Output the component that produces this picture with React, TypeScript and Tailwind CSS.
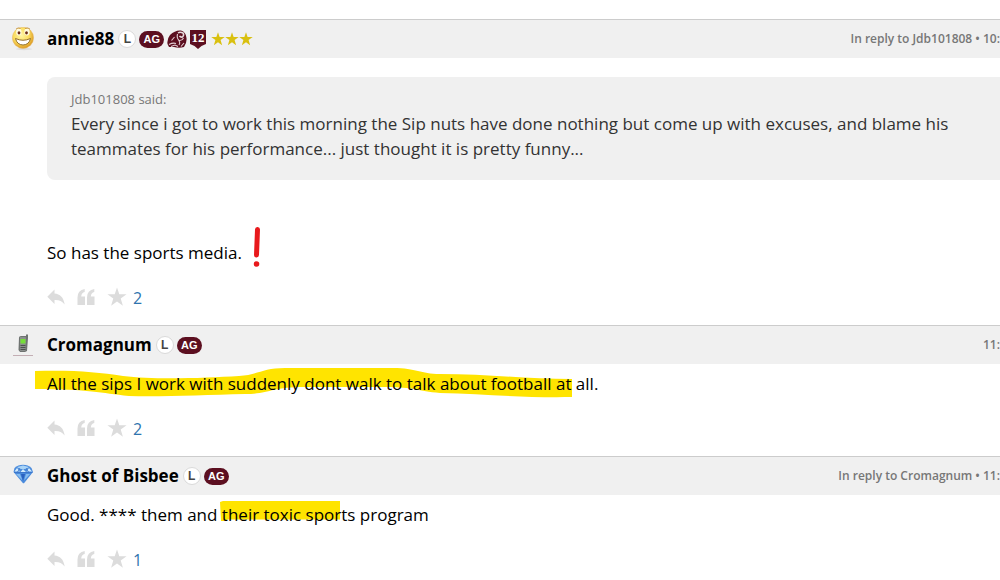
import React from 'react';

interface Post {
  author: string;
  avatar: React.ReactNode;
  veteran?: boolean;
  meta: string;
  quote?: { author: string; text: string };
  body: React.ReactNode;
  stars: number;
}

const SmileyAvatar = () => (
  <svg className="h-6 w-6" viewBox="0 0 24 24" aria-hidden="true">
    <defs>
      <radialGradient id="smile" cx="42%" cy="38%" r="62%">
        <stop offset="0" stopColor="#fff6a6" />
        <stop offset="0.6" stopColor="#fadb5c" />
        <stop offset="1" stopColor="#dc9a24" />
      </radialGradient>
    </defs>
    <ellipse cx="13" cy="22" rx="8" ry="1.2" fill="#dedede" />
    <circle cx="12" cy="10.8" r="10.6" fill="url(#smile)" stroke="#e5b868" strokeWidth="0.5" />
    <ellipse cx="7.8" cy="5" rx="2.7" ry="3.4" fill="#fffbe0" />
    <ellipse cx="16" cy="5" rx="2.7" ry="3.4" fill="#fffbe0" />
    <path d="M5 2Q7 .2 9.5 1.5M14 1.5Q17 .2 19 2" stroke="#c08a35" strokeWidth="0.8" fill="none" />
    <ellipse cx="8" cy="5.8" rx="1.4" ry="1.6" fill="#6b2a16" />
    <ellipse cx="15.5" cy="5.8" rx="1.4" ry="1.6" fill="#6b2a16" />
    <path d="M4.5 11.5Q12 15 19.5 11.5Q18 17.8 12 18Q6 17.8 4.5 11.5Z" fill="#fff" stroke="#94702e" strokeWidth="1" />
  </svg>
);

const PhoneAvatar = () => (
  <svg className="h-6 w-6" viewBox="0 0 24 24" aria-hidden="true">
    <path d="M2 22.5H22" stroke="#c3aeb4" strokeWidth="1" />
    <path d="M15 3V1.5h2V5L16 18l-2 1H9l-1.5-2L8 4.5Q8 3 10 3z" fill="#6f7371" />
    <path d="M9 4h5.5l.5 1-.5 13H9z" fill="#8b8f8d" />
    <rect x="9.5" y="6" width="5" height="4.5" fill="#75df38" />
    <path d="M9.5 12.5h5M9.5 14.5h5M9.5 16.5h5" stroke="#4c504e" strokeWidth="1" />
  </svg>
);

const DiamondAvatar = () => (
  <svg className="h-6 w-6" viewBox="0 0 24 24" aria-hidden="true">
    <path d="M3.5 4Q7 .8 12 .8T20.5 4L22 8 13 19.2H12L2.5 8z" fill="#4b8bdc" />
    <path d="M6 3L12 1.5 18 3 15 5H9z" fill="#a9d4f7" />
    <path d="M3.5 7.5L6 4l3 3.500zM9.5 8L12 5l3 3zM15.5 7.5L18 4l3 3.500z" fill="#d3ecfc" />
    <path d="M5 10h4l2.500 6.500zM15 10h4l-6 6.500z" fill="#86bdf0" />
    <path d="M10 10h4l-2 7z" fill="#2a62c0" />
    <path d="M3 8.5H21.5M9 4L6.5 8M15 4L17.5 8" stroke="#3872c8" strokeWidth="0.8" />
  </svg>
);

const HelmetBadge = () => (
  <svg className="h-5 w-5" viewBox="0 0 20 20" aria-label="Ring of honor">
    <path d="M.5 15Q-.2 10 3 6Q8 1 14 1.5Q19 3 19.5 9Q20 14 17 18Q12 19.5 7 18H2z" fill="#5c0f20" />
    <path d="M11 4Q13 2.5 16 4Q17.5 6 15.5 8Q13.5 8.5 12.5 7" stroke="#e8d9dc" strokeWidth="1.5" fill="none" />
    <path d="M10.5 5Q9.500 9 12 11.500Q13.500 14 12 16M12 11.500Q15 12 16.500 9M2 15.500Q6 13.500 9 14.500M4 17.500L8 16 11 17.500M14 17.500L17 14M4.500 11.500L7.500 8" stroke="#e3cfd4" strokeWidth="1.1" fill="none" />
  </svg>
);

const TwelveBadge = () => (
  <svg className="h-5 w-4" viewBox="0 0 16 20" aria-label="12th man">
    <path d="M0 1H16V15L11.5 17 8 20 4.5 17 0 15z" fill="#5c0f20" />
    <text x="8" y="13" textAnchor="middle" fontSize="13" fontWeight="700" fill="#fff" fontFamily="Liberation Serif, serif">12</text>
  </svg>
);

const StarShape = ({ className }: { className: string }) => (
  <svg className={className} viewBox="0 0 20 20" fill="currentColor" aria-hidden="true">
    <path d="M10 .5L12.3 7.3H19.6L13.7 11.6 15.9 18.8 10 14.5 4.1 18.8 6.3 11.6 .4 7.3H7.7z" />
  </svg>
);

const ReplyIcon = () => (
  <svg className="h-[18px] w-[18px]" viewBox="0 0 18 18" fill="currentColor" aria-hidden="true">
    <path d="M7.5 1.5V5.5C13 6 16.5 9 17.7 16.5C15 12.8 12 11.8 7.5 12V16L.3 8.8z" />
  </svg>
);

const QuoteIcon = () => (
  <svg className="h-[18px] w-[18px]" viewBox="0 0 18 18" fill="currentColor" aria-hidden="true">
    <path d="M7.7 1V4Q4.5 4.6 4.2 8.5H8V17H.5V9.5Q.5 2 7.7 1zM17.3 1V4Q14.1 4.6 13.8 8.5H17.5V17H10V9.5Q10 2 17.3 1z" />
  </svg>
);

// Marker strokes drawn under the text
const LongHighlight = () => (
  <svg className="absolute -top-1 -left-3 -z-10 h-[30px] w-[537px]" viewBox="0 0 537 30" aria-hidden="true">
    <path
      d="M0 3C40 2 62 4 88 8C120 12 170 10 204 8C222 7 228 0 250 0H358C382 0 385 6 405 6C450 6 492 11 537 11V29C490 30 450 26 405 25C382 23 380 19 350 19H270C235 19 235 26 210 26C170 27 125 29 94 28C65 25 55 21 0 21z"
      fill="#ffe400"
    />
  </svg>
);

const ShortHighlight = () => (
  <svg className="absolute -top-0.5 -left-0.5 -z-10 h-5 w-[120px]" viewBox="0 0 120 20" aria-hidden="true">
    <path d="M0 1L3 0H120V18.5H7V20H1z" fill="#ffe400" />
  </svg>
);

const ExclamationMark = () => (
  <svg className="absolute -top-3.5 left-full ml-2.5 h-10 w-2.5" viewBox="0 0 10 40" aria-hidden="true">
    <path d="M5.5 2.5L4.5 28" stroke="#e8191c" strokeWidth="5" strokeLinecap="round" />
    <circle cx="4.5" cy="37" r="2.8" fill="#e8191c" />
  </svg>
);

const posts: Post[] = [
  {
    author: 'annie88',
    avatar: <SmileyAvatar />,
    veteran: true,
    meta: 'In reply to Jdb101808 • 10:',
    quote: {
      author: 'Jdb101808',
      text: 'Every since i got to work this morning the Sip nuts have done nothing but come up with excuses, and blame his teammates for his performance... just thought it is pretty funny...',
    },
    body: (
      <span className="relative">
        So has the sports media.
        <ExclamationMark />
      </span>
    ),
    stars: 2,
  },
  {
    author: 'Cromagnum',
    avatar: <PhoneAvatar />,
    meta: '11:',
    body: (
      <span className="relative">
        <LongHighlight />
        All the sips I work with suddenly dont walk to talk about football at all.
      </span>
    ),
    stars: 2,
  },
  {
    author: 'Ghost of Bisbee',
    avatar: <DiamondAvatar />,
    meta: 'In reply to Cromagnum • 11:',
    body: (
      <>
        Good. **** them and{' '}
        <span className="relative">
          <ShortHighlight />
          their toxic sports program
        </span>
      </>
    ),
    stars: 1,
  },
];

const PostHeader = ({ post }: { post: Post }) => (
  <header className="flex h-[39px] items-center border-t border-[#cccccc] bg-[#f0f0f0] pl-[11px]">
    {post.avatar}
    <h2 className="ml-3 text-[17px] font-bold text-black">{post.author}</h2>
    <div className="ml-1 flex items-center gap-[3px] font-['Liberation_Sans',sans-serif]">
      <span className="flex h-[18px] w-[18px] items-center justify-center rounded-full border border-[#dadada] bg-white text-[12px] font-bold text-[#444]">L</span>
      <span className="flex h-[17px] w-[25px] items-center justify-center rounded-full bg-[#5c0f20] text-[11px] font-bold text-white">AG</span>
      {post.veteran && (
        <>
          <HelmetBadge />
          <TwelveBadge />
          <div className="ml-0.5 flex text-[#d9c00f]">
            <StarShape className="h-3.5 w-3.5" />
            <StarShape className="h-3.5 w-3.5" />
            <StarShape className="h-3.5 w-3.5" />
          </div>
        </>
      )}
    </div>
    <p className="ml-auto text-[12px] font-semibold whitespace-nowrap text-[#777]">{post.meta}</p>
  </header>
);

const PostActions = ({ stars }: { stars: number }) => (
  <div className="mt-5 flex h-6 items-center text-[#dcdcdc]">
    <button type="button" aria-label="Reply"><ReplyIcon /></button>
    <button type="button" aria-label="Quote" className="ml-3"><QuoteIcon /></button>
    <button type="button" aria-label="Star" className="ml-3"><StarShape className="h-5 w-5" /></button>
    <a href="#stars" className="ml-1.5 pt-0.5 text-[16px] text-[#2f74ae]">{stars}</a>
  </div>
);

const PostItem = ({ post }: { post: Post }) => (
  <article>
    <PostHeader post={post} />
    <div className="pb-4 pl-[47px]">
      {post.quote && (
        <blockquote className="mt-[19px] mb-[53px] rounded-l-lg bg-[#f0f0f0] pt-3 pr-12 pb-[19px] pl-6 text-[#333]">
          <cite className="mb-0.5 block text-[13px] leading-5 font-medium text-[#777] not-italic">{post.quote.author} said:</cite>
          <p className="text-[17px] leading-[25px]">{post.quote.text}</p>
        </blockquote>
      )}
      <p className="relative z-0 pt-[7px] text-[17px] leading-[25px] text-black">{post.body}</p>
      <PostActions stars={post.stars} />
    </div>
  </article>
);

export default function App() {
  return (
    <main className="min-h-screen bg-white pt-[19px] font-['Open_Sans',sans-serif]">
      {posts.map((post) => (
        <PostItem key={post.author} post={post} />
      ))}
    </main>
  );
}
